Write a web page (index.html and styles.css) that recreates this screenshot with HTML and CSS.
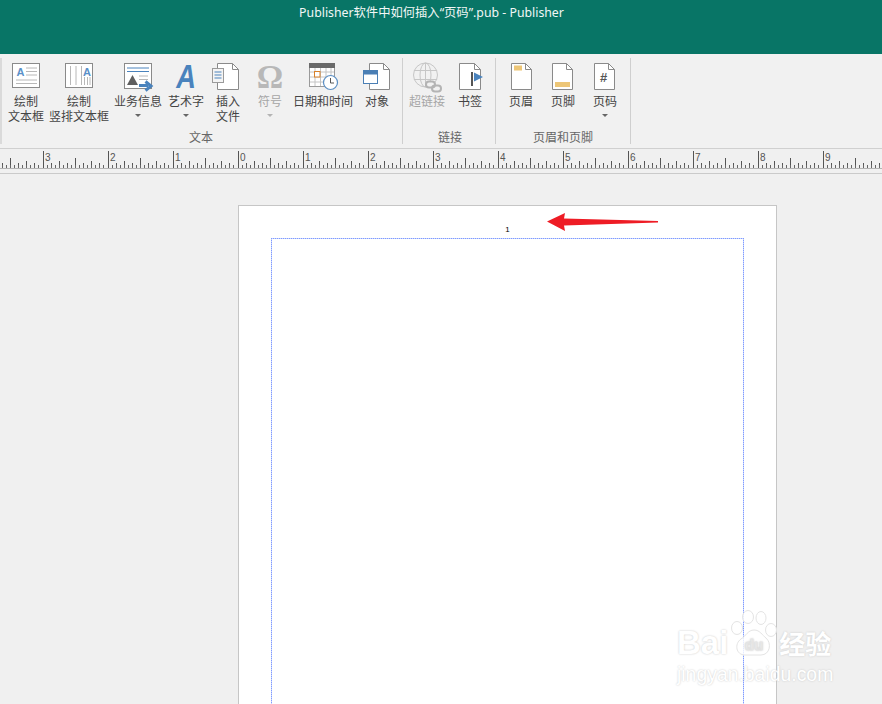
FILE: index.html
```html
<!DOCTYPE html>
<html lang="zh-CN">
<head>
    <meta charset="UTF-8">
    <meta name="viewport" content="width=device-width, initial-scale=1.0">
    <title>Publisher软件中如何插入“页码”.pub - Publisher</title>
    <link rel="stylesheet" href="styles.css">
</head>
<body>
    <header class="title-bar">Publisher软件中如何插入“页码”.pub - Publisher</header>

    <div class="ribbon">
        <section class="group group-text">
            <div class="tools">
                <div class="tool w44">
                    <svg class="icon" viewBox="0 0 32 32">
                        <rect x="2.5" y="2.5" width="27" height="24" fill="#fff" stroke="#8a8a8a"/>
                        <text x="10.5" y="14.5" class="icon-letter" font-size="11" fill="#5a90c8">A</text>
                        <path d="M16 7h11M16 10.5h11M16 14h11M6 19h21M6 22.500h21" stroke="#b8b8b8"/>
                    </svg>
                    <span>绘制<br>文本框</span>
                </div>
                <div class="tool w62">
                    <svg class="icon" viewBox="0 0 32 32">
                        <rect x="2.500" y="2.500" width="27" height="24" fill="#fff" stroke="#8a8a8a"/>
                        <path d="M7.500 5v19M13 5v19M18.500 5v19M21.500 16v8M24.500 16v8M27 16v8" stroke="#b8b8b8"/>
                        <text x="24" y="14.500" class="icon-letter" font-size="11" fill="#5a90c8">A</text>
                    </svg>
                    <span>绘制<br>竖排文本框</span>
                </div>
                <div class="tool w56">
                    <svg class="icon" viewBox="0 0 32 32">
                        <rect x="2.500" y="2.500" width="27" height="25" fill="#fff" stroke="#8a8a8a"/>
                        <path d="M5 7h22M5 10.500h22" stroke="#4a83bd"/>
                        <path d="M17 15h9M17 18.500h9" stroke="#b8b8b8"/>
                        <path d="M5 24l5.500-10 5.500 10z" fill="#5f5f5f"/>
                        <path d="M17 24.500h9M23.500 20.500l5.500 4.500-5.500 4.500" fill="none" stroke="#4a83bd" stroke-width="3"/>
                    </svg>
                    <span>业务信息</span>
                    <i class="caret"></i>
                </div>
                <div class="tool w40">
                    <svg class="icon" viewBox="0 0 32 32">
                        <text x="16" y="27" class="icon-letter art-letter" font-size="34" fill="#4a83bd" transform="translate(3.200 0) scale(0.800 1)">A</text>
                    </svg>
                    <span>艺术字</span>
                    <i class="caret"></i>
                </div>
                <div class="tool w44">
                    <svg class="icon" viewBox="0 0 32 32">
                        <path d="M5.500 2.500h15l6 6v20h-21z" fill="#fff" stroke="#8a8a8a"/>
                        <path d="M20.500 2.500v6h6" fill="none" stroke="#8a8a8a"/>
                        <rect x="0.500" y="7.500" width="11" height="14" fill="#f4f4f4" stroke="#9a9a9a"/>
                        <path d="M2.500 11h7M2.500 14h7M2.500 17h7" stroke="#4a83bd"/>
                    </svg>
                    <span>插入<br>文件</span>
                </div>
                <div class="tool w40 disabled">
                    <svg class="icon" viewBox="0 0 32 32">
                        <text x="16" y="27" class="omega" font-size="33" fill="#b8b8b8">Ω</text>
                    </svg>
                    <span>符号</span>
                    <i class="caret"></i>
                </div>
                <div class="tool w66">
                    <svg class="icon" viewBox="0 0 32 32">
                        <rect x="2.500" y="2.500" width="25" height="23" fill="#fff" stroke="#9a9a9a"/>
                        <rect x="2" y="2" width="26" height="5" fill="#6a6a6a"/>
                        <path d="M8 7v18M13.500 7v18M19 7v18M24 7v18M3 11h24M3 16h24M3 21h24" stroke="#c4c4c4"/>
                        <rect x="7.500" y="10.500" width="5.500" height="5.500" fill="#fff" stroke="#d9822b"/>
                        <circle cx="23.500" cy="21.500" r="7" fill="#fff" stroke="#5b8fc4" stroke-width="1.200"/>
                        <path d="M23.500 17v5h3.500" fill="none" stroke="#555"/>
                    </svg>
                    <span>日期和时间</span>
                </div>
                <div class="tool w42">
                    <svg class="icon" viewBox="0 0 32 32">
                        <path d="M8.500 2.500h14l6 6v20h-20z" fill="#fff" stroke="#8a8a8a"/>
                        <path d="M22.500 2.500v6h6" fill="none" stroke="#8a8a8a"/>
                        <rect x="2.500" y="9.500" width="14" height="13" fill="#fff" stroke="#4a7fb5"/>
                        <rect x="2" y="9" width="15" height="4.500" fill="#4a7fb5"/>
                    </svg>
                    <span>对象</span>
                </div>
            </div>
            <div class="group-label">文本</div>
        </section>

        <section class="group group-links">
            <div class="tools">
                <div class="tool w44 disabled">
                    <svg class="icon" viewBox="0 0 32 32">
                        <circle cx="14.500" cy="14" r="12" fill="none" stroke="#c6c6c6"/>
                        <ellipse cx="14.500" cy="14" rx="5.500" ry="12" fill="none" stroke="#c6c6c6"/>
                        <path d="M14.500 2v24M3 9.500h23M3 18.500h23" stroke="#c6c6c6"/>
                        <rect x="15" y="20.500" width="9" height="6" rx="3" fill="#f1f1f1" stroke="#b4b4b4" stroke-width="2"/>
                        <rect x="21" y="24.500" width="9" height="6" rx="3" fill="none" stroke="#b4b4b4" stroke-width="2"/>
                    </svg>
                    <span>超链接</span>
                </div>
                <div class="tool w42">
                    <svg class="icon" viewBox="0 0 32 32">
                        <path d="M5.500 2.500h15l6 6v20h-21z" fill="#fff" stroke="#8a8a8a"/>
                        <path d="M20.500 2.500v6h6" fill="none" stroke="#8a8a8a"/>
                        <rect x="17" y="11" width="2" height="14" fill="#555"/>
                        <path d="M20 11.500l9 4.500-9 4.500z" fill="#4a83bd"/>
                    </svg>
                    <span>书签</span>
                </div>
            </div>
            <div class="group-label">链接</div>
        </section>

        <section class="group group-header">
            <div class="tools">
                <div class="tool w42">
                    <svg class="icon" viewBox="0 0 32 32">
                        <path d="M6.500 2.500h14l6 6v20h-20z" fill="#fff" stroke="#8a8a8a"/>
                        <path d="M20.500 2.500v6h6" fill="none" stroke="#8a8a8a"/>
                        <rect x="9" y="4.500" width="8" height="5" fill="#edc677"/>
                    </svg>
                    <span>页眉</span>
                </div>
                <div class="tool w42">
                    <svg class="icon" viewBox="0 0 32 32">
                        <path d="M5.500 2.500h14l6 6v20h-20z" fill="#fff" stroke="#8a8a8a"/>
                        <path d="M19.500 2.500v6h6" fill="none" stroke="#8a8a8a"/>
                        <rect x="8" y="21" width="15" height="5" fill="#edc677"/>
                    </svg>
                    <span>页脚</span>
                </div>
                <div class="tool w42">
                    <svg class="icon" viewBox="0 0 32 32">
                        <path d="M5.500 2.500h14l6 6v20h-20z" fill="#fff" stroke="#8a8a8a"/>
                        <path d="M19.500 2.500v6h6" fill="none" stroke="#8a8a8a"/>
                        <text x="14.500" y="21" class="icon-letter" font-size="13" fill="#555">#</text>
                    </svg>
                    <span>页码</span>
                    <i class="caret"></i>
                </div>
            </div>
            <div class="group-label">页眉和页脚</div>
        </section>
    </div>

    <div class="ruler">
        <div class="ruler-unit"></div>
        <div class="ruler-unit">3</div>
        <div class="ruler-unit">2</div>
        <div class="ruler-unit">1</div>
        <div class="ruler-unit">0</div>
        <div class="ruler-unit">1</div>
        <div class="ruler-unit">2</div>
        <div class="ruler-unit">3</div>
        <div class="ruler-unit">4</div>
        <div class="ruler-unit">5</div>
        <div class="ruler-unit">6</div>
        <div class="ruler-unit">7</div>
        <div class="ruler-unit">8</div>
        <div class="ruler-unit">9</div>
    </div>

    <main class="workspace">
        <div class="page">
            <div class="page-number">1</div>
            <div class="margin-box"></div>
            <svg class="red-arrow" viewBox="0 0 114 20">
                <path d="M1 9.500L19 1l-1 5.500 94 2.500v1.500L18 13.500l1 5.500z" fill="#ee1c25"/>
            </svg>
        </div>
    </main>

    <div class="watermark">
        <div class="wm-top">
            <span class="wm-baidu">Bai</span>
            <svg class="wm-paw" viewBox="0 0 48 48">
                <ellipse cx="7" cy="18" rx="5.500" ry="6.500"/>
                <ellipse cx="18" cy="7" rx="5.500" ry="6.500"/>
                <ellipse cx="31" cy="8" rx="5" ry="6.500"/>
                <ellipse cx="41" cy="20" rx="5.500" ry="6.500"/>
                <path d="M24 20c6 0 8 5 12 8 6 5 4 17-5 17H15C6 45 4 34 11 29c5-3 7-9 13-9z"/>
                <text x="24" y="40" class="wm-du">du</text>
            </svg>
            <span class="wm-cn">经验</span>
        </div>
        <div class="wm-url">jingyan.baidu.com</div>
    </div>
</body>
</html>
```

FILE: styles.css
```css
* {
    box-sizing: border-box;
}

html, body {
    height: 100%;
}

body {
    display: flex;
    flex-direction: column;
    margin: 0;
    overflow: hidden;
    position: relative;
    background-color: #f0f0f0;
    color: #444;
    font-family: "Noto Sans CJK SC", "Noto Sans", sans-serif;
    font-size: 12px;
}

.title-bar {
    flex: none;
    height: 54px;
    padding: 4px 19px 0 0;
    background-color: #087566;
    color: #f2f7f6;
    font-family: "Noto Sans", "Noto Sans CJK SC", sans-serif;
    font-size: 12.3px;
    line-height: 18px;
    text-align: center;
}

/* ribbon */
.ribbon {
    display: flex;
    flex: none;
    height: 94px;
    padding: 4px 0 0 0;
    background-color: #f1f1f1;
}

.group {
    display: flex;
    flex-direction: column;
    height: 86px;
    border-right: 1px solid #cfcfcf;
}

.group-text {
    width: 403px;
    padding-left: 4px;
    border-left: 2px solid #dadada;
}

.group-links {
    width: 93px;
    padding-left: 2px;
}

.group-header {
    width: 135px;
    padding-left: 4px;
}

.tools {
    display: flex;
    flex: 1;
    padding-top: 3px;
}

.tool {
    display: flex;
    flex-direction: column;
    align-items: center;
    line-height: 15px;
    text-align: center;
    white-space: nowrap;
}

.w40 { width: 40px; }
.w42 { width: 42px; }
.w44 { width: 44px; }
.w56 { width: 56px; }
.w62 { width: 62px; }
.w66 { width: 66px; }

.group-text .tools {
    margin-left: -2px;
}

.icon {
    display: block;
    flex: none;
    width: 32px;
    height: 32px;
    overflow: visible;
}

.icon-letter {
    font-family: "Liberation Sans", sans-serif;
    font-weight: bold;
    text-anchor: middle;
}

.art-letter {
    font-style: italic;
}

.omega {
    font-family: "Liberation Serif", serif;
    font-weight: bold;
    text-anchor: middle;
}

.caret {
    width: 0;
    height: 0;
    margin-top: 6px;
    border-left: 3px solid transparent;
    border-right: 3px solid transparent;
    border-top: 3px solid #666;
}

.disabled {
    color: #a6a6a6;
}

.disabled .caret {
    border-top-color: #b4b4b4;
}

.group-label {
    height: 14px;
    color: #666;
    line-height: 14px;
    text-align: center;
}

.group-text .group-label {
    margin-left: -6px;
}

.group-header .group-label {
    margin-left: -4px;
}

/* ruler */
.ruler {
    display: flex;
    flex: none;
    height: 26px;
    margin-left: -22px;
    border-top: 1px solid #d0d0d0;
    border-bottom: 1px solid #cacaca;
    overflow: hidden;
}

.ruler-unit {
    flex: none;
    width: 65px;
    height: 20px;
    padding: 4px 4px 0 2px;
    border-bottom: 1px solid #b4b4b4;
    color: #555;
    font-family: "Liberation Sans", sans-serif;
    font-size: 10px;
    line-height: 10px;
    background-image:
        linear-gradient(to right, #666 1px, transparent 1px),
        linear-gradient(#555, #555),
        linear-gradient(#555, #555),
        linear-gradient(#555, #555),
        linear-gradient(#555, #555),
        linear-gradient(#555, #555),
        linear-gradient(#555, #555),
        linear-gradient(#555, #555),
        linear-gradient(#555, #555);
    background-repeat: repeat-x, no-repeat, no-repeat, no-repeat, no-repeat, no-repeat, no-repeat, no-repeat, no-repeat;
    background-clip: content-box, padding-box, padding-box, padding-box, padding-box, padding-box, padding-box, padding-box, padding-box;
    background-position:
        0 100%,
        0 100%,
        32px 100%,
        16px 100%,
        48px 100%,
        8px 100%,
        24px 100%,
        40px 100%,
        56px 100%;
    background-size:
        4px 3px,
        1px 17px,
        1px 10px,
        1px 7px,
        1px 7px,
        1px 5px,
        1px 5px,
        1px 5px,
        1px 5px;
}

/* page */
.workspace {
    flex: 1;
    min-height: 0;
    padding: 31px 0 0 238px;
    overflow: hidden;
}

.page {
    position: relative;
    width: 539px;
    height: 700px;
    padding: 0 32px;
    background-color: #fff;
    border: 1px solid #c6c6c6;
}

.page-number {
    height: 32px;
    padding-top: 20px;
    color: #000;
    font-family: "Liberation Sans", sans-serif;
    font-size: 8px;
    line-height: 8px;
    text-align: center;
}

/* 1px dots, drawn as gradients so the blue stays clean */
.margin-box {
    height: 600px;
    background-image:
        linear-gradient(to right, #7f9bff 1px, #c8d4ff 1px),
        linear-gradient(to right, #7f9bff 1px, #c8d4ff 1px),
        linear-gradient(#7f9bff 1px, #c8d4ff 1px),
        linear-gradient(#7f9bff 1px, #c8d4ff 1px);
    background-repeat: repeat-x, repeat-x, repeat-y, repeat-y;
    background-position: 0 0, 0 100%, 0 0, 100% 0;
    background-size: 2px 1px, 2px 1px, 1px 2px, 1px 2px;
}

.red-arrow {
    position: absolute;
    top: 6px;
    left: 307px;
    width: 114px;
    height: 20px;
}

/* watermark */
.watermark {
    position: absolute;
    top: 610px;
    left: 677px;
    width: 160px;
    color: #fff;
    text-shadow: 0 0 2px #c4c4c4;
    pointer-events: none;
}

.wm-top {
    display: flex;
    align-items: flex-end;
    height: 48px;
}

.wm-baidu {
    font-family: "Liberation Sans", sans-serif;
    font-size: 33px;
    font-weight: bold;
    line-height: 30px;
}

.wm-paw {
    flex: none;
    width: 48px;
    height: 48px;
    margin-left: 2px;
    fill: rgba(255, 255, 255, 0.8);
    stroke: #e4e4e4;
}

.wm-du {
    font-family: "Liberation Sans", sans-serif;
    font-size: 15px;
    font-weight: bold;
    text-anchor: middle;
    stroke-width: 0.6;
}

.wm-cn {
    margin-left: 1px;
    font-size: 26px;
    font-weight: bold;
    line-height: 30px;
}

.wm-url {
    margin-top: 6px;
    font-family: "Liberation Sans", sans-serif;
    font-size: 19.400px;
    line-height: 20px;
    white-space: nowrap;
}
```
